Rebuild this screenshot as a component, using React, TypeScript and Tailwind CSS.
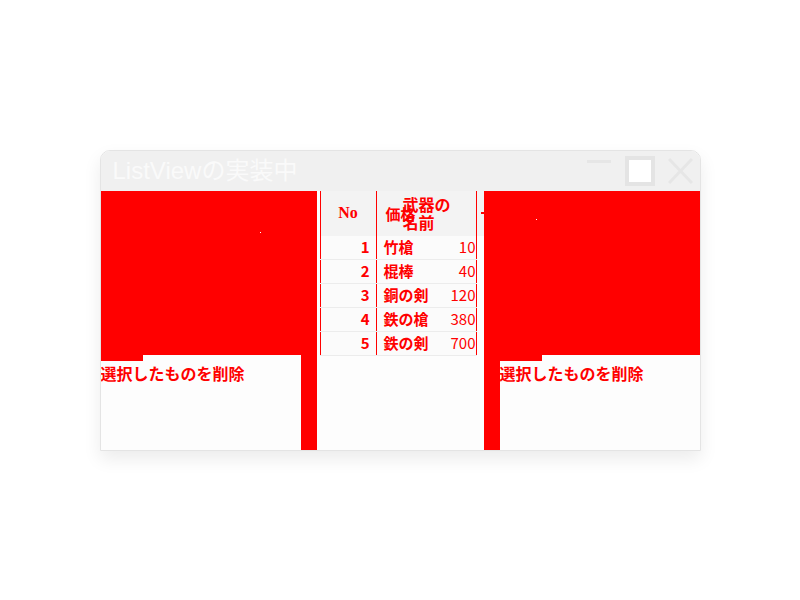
const cjk = { fontFamily: '"Noto Sans CJK JP", "Noto Sans", sans-serif' };

const rows = [
  { no: 1, name: "竹槍", price: 10 },
  { no: 2, name: "棍棒", price: 40 },
  { no: 3, name: "銅の剣", price: 120 },
  { no: 4, name: "鉄の槍", price: 380 },
  { no: 5, name: "鉄の剣", price: 700 },
];

function WindowControls() {
  return (
    <div className="ml-auto flex h-full items-center pr-[7px]">
      <div className="mb-[19px] h-[3px] w-[24px] bg-[#e6e6e6]" />
      <div className="ml-[14px] h-[30px] w-[30px] border-[4px] border-[#e4e4e4] bg-white" />
      <svg className="ml-[13px]" width="25" height="26" viewBox="0 0 25 26">
        <path d="M1 1 L24 25 M24 1 L1 25" stroke="#e6e6e6" strokeWidth="3" fill="none" />
      </svg>
    </div>
  );
}

function DeleteButton({ side }: { side: "left" | "right" }) {
  const bar = <div className="w-[16px] self-stretch bg-[#ff0000]" />;
  return (
    <div className="flex flex-1">
      {side === "right" && bar}
      <div className="flex flex-1 flex-col">
        <div className="h-[6px] w-[42px] bg-[#ff0000]" />
        <span className="text-[16px] leading-[24px] font-bold text-[#ff0000]" style={cjk}>
          選択したものを削除
        </span>
      </div>
      {side === "left" && bar}
    </div>
  );
}

function ItemTable() {
  return (
    <div className="flex w-[167px] flex-col pl-[3px]">
      <div className="flex h-[45px] bg-[#f3f3f3]">
        <div className="flex w-[57px] items-center justify-center border-x border-[#ff0000]">
          <span className="text-[16px] font-bold text-[#ff0000]" style={{ fontFamily: '"Liberation Serif", serif' }}>
            No
          </span>
        </div>
        <div className="flex w-[100px] items-center border-r border-[#ff0000] pl-[9px] text-[15px] font-bold text-[#ff0000]" style={cjk}>
          <span className="mt-[2px]">価格</span>
          <span className="-ml-[13px] w-[48px] text-[16px] leading-[18px]">武器の名前</span>
        </div>
        <div className="flex flex-1 items-center justify-end">
          <div className="h-[2px] w-[3px] bg-[#ff0000]" />
        </div>
      </div>
      {rows.map((r) => (
        <div key={r.no} className="flex h-[24px] w-[157px] border-b border-[#ececec] bg-[#fbfbfb] text-[15px] text-[#ff0000]" style={cjk}>
          <div className="flex w-[57px] items-center justify-end border-x border-[#ff0000] pr-[6px] font-bold">{r.no}</div>
          <div className="flex w-[100px] items-center justify-between border-r border-[#ff0000] pl-[7px]">
            <span className="font-bold">{r.name}</span>
            <span>{r.price}</span>
          </div>
        </div>
      ))}
    </div>
  );
}

export default function App() {
  return (
    <div className="flex h-screen items-center justify-center bg-white">
      <div className="flex h-[301px] w-[601px] flex-col overflow-hidden rounded-t-[10px] border border-[#e4e4e4] bg-[#fdfdfd] shadow-[0_8px_18px_rgba(0,0,0,0.08)]">
        <div className="flex h-[40px] items-center bg-[#f0f0f0] pl-[12px]">
          <span className="text-[24px] text-[#fafafa]" style={{ fontFamily: '"Liberation Sans", "Noto Sans CJK JP", sans-serif' }}>
            ListViewの実装中
          </span>
          <WindowControls />
        </div>
        <div className="flex flex-1">
          <div className="flex w-[216px] flex-col">
            <div className="relative h-[164px] bg-[#ff0000]">
              <span className="absolute left-[159px] top-[41px] h-px w-px bg-white" />
            </div>
            <DeleteButton side="left" />
          </div>
          <ItemTable />
          <div className="flex flex-1 flex-col">
            <div className="relative h-[164px] bg-[#ff0000]">
              <span className="absolute left-[52px] top-[28px] h-px w-px bg-white" />
            </div>
            <DeleteButton side="right" />
          </div>
        </div>
      </div>
    </div>
  );
}
